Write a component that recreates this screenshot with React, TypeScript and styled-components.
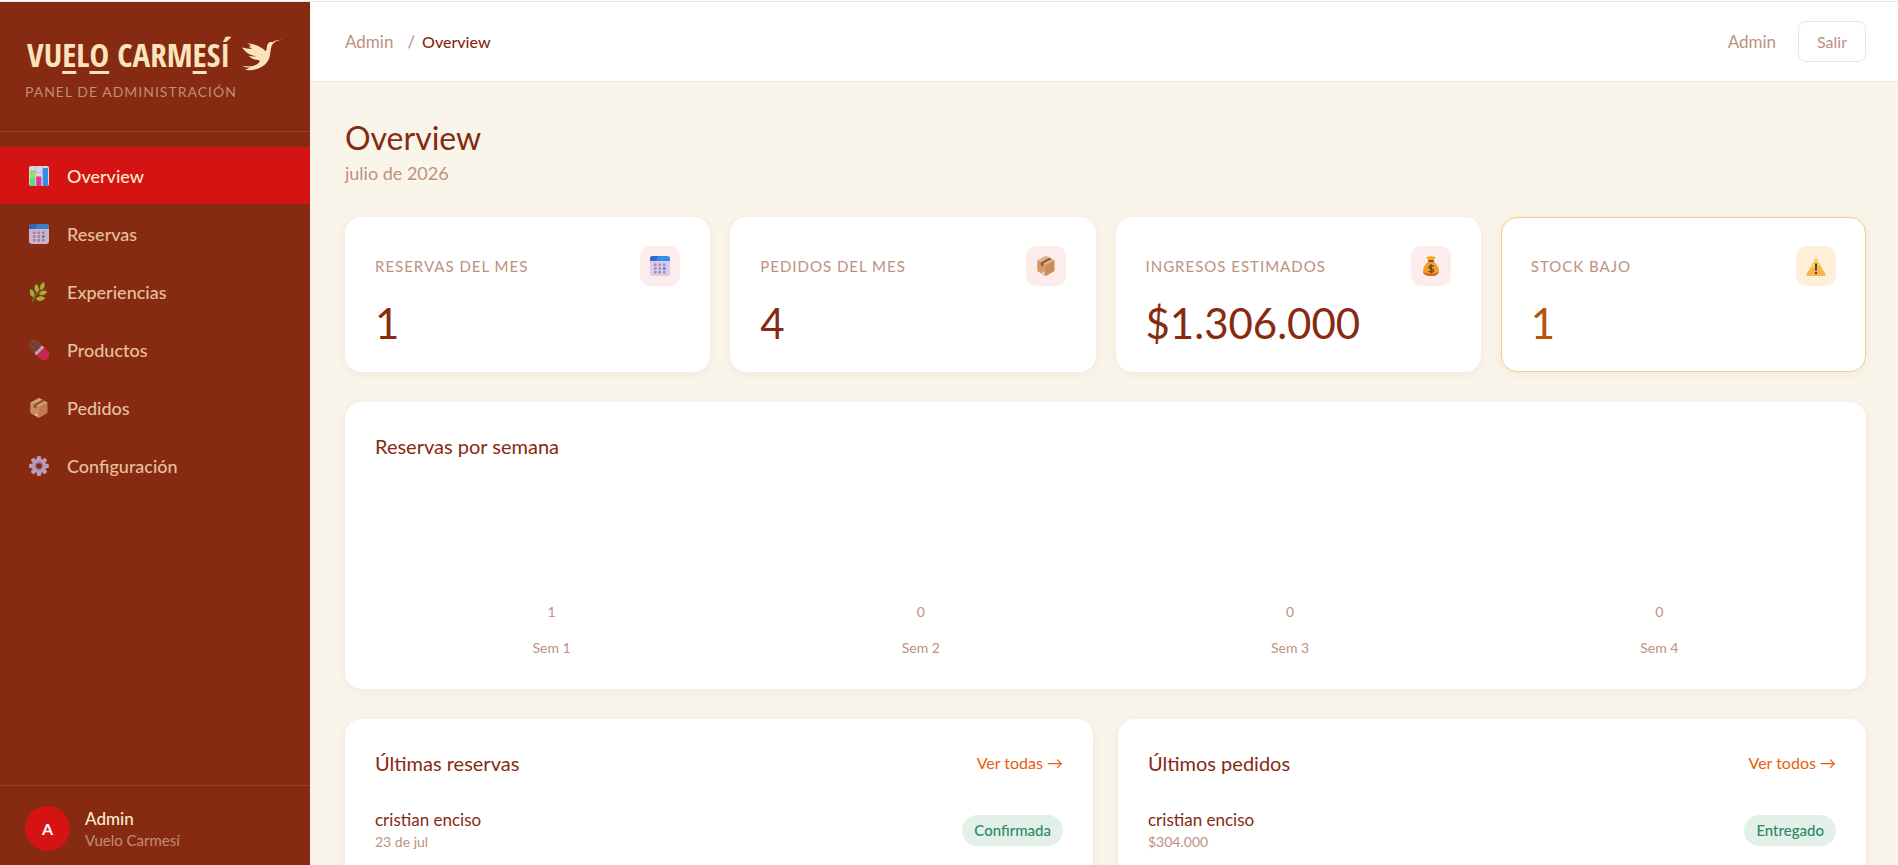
import React from "react";
import styled, { createGlobalStyle } from "styled-components";

const c = {
  brown: "#862a12",
  red: "#d61313",
  cream: "#faf5ea",
  sand: "#fbe3bd",
  muted: "#bd9181",
};

const GlobalStyle = createGlobalStyle`
  * { box-sizing: border-box; }
  body {
    margin: 0;
    background: ${c.cream};
    color: ${c.brown};
    font-family: Lato, "Open Sans", sans-serif;
    font-size: 16px;
    line-height: 24px;
  }
  h1, h2, p, ul { margin: 0; padding: 0; }
  ul { list-style: none; }
  a { text-decoration: none; }
`;

/* ---------- shell ---------- */

const Page = styled.div`
  height: 100vh;
  display: flex;
  flex-direction: column;
`;

const TopRule = styled.div`
  flex: none;
  height: 2px;
  background: #fff;
  border-bottom: 1px solid #e2e2e2;
`;

const Shell = styled.div`
  flex: 1;
  min-height: 0;
  display: flex;
`;

const Sidebar = styled.aside`
  flex: none;
  width: 310px;
  display: flex;
  flex-direction: column;
  background: ${c.brown};
`;

const Brand = styled.div`
  height: 130px;
  padding: 30px 25px 0;
  border-bottom: 1px solid #96422a;
`;

const Logo = styled.div`
  display: flex;
  align-items: center;
  justify-content: space-between;
  height: 46px;
  padding: 0 2px;
  color: ${c.sand};
  font-family: "Open Sans Condensed", "Roboto Condensed", Lato, sans-serif;
  font-size: 33px;
  font-weight: 700;
  line-height: 46px;
  white-space: nowrap;
`;

const Raised = styled.span`
  text-decoration: underline;
  text-decoration-thickness: 3px;
  text-underline-offset: 4px;
`;

const BrandNote = styled.p`
  color: #c48d73;
  font-size: 14px;
  line-height: 24px;
  letter-spacing: 1px;
  margin-top: 2px;
  text-transform: uppercase;
`;

const Nav = styled.nav`
  flex: 1;
  padding-top: 15px;
`;

const NavLink = styled.a<{ $active?: boolean }>`
  display: flex;
  align-items: center;
  gap: 18px;
  height: 57px;
  margin-bottom: 1px;
  padding: 0 29px;
  background: ${(p) => (p.$active ? c.red : "transparent")};
  color: ${(p) => (p.$active ? "#fdeacb" : "#e6c19d")};
  font-size: 18px;
  font-weight: 500;
  svg { opacity: ${(p) => (p.$active ? 1 : 0.85)}; }
`;

const Account = styled.div`
  display: flex;
  align-items: center;
  gap: 15px;
  padding: 20px 25px 14px;
  border-top: 1px solid #96422a;
`;

const Avatar = styled.div`
  width: 45px;
  height: 45px;
  border-radius: 50%;
  background: ${c.red};
  color: #fff;
  display: grid;
  place-items: center;
  font-weight: 700;
`;

const AccountName = styled.p`
  color: #fdeacb;
  font-size: 17px;
  font-weight: 500;
  line-height: 22px;
`;

const AccountNote = styled.p`
  color: #c48d73;
  font-size: 15px;
  line-height: 20px;
`;

const Main = styled.main`
  flex: 1;
  min-width: 0;
  overflow-y: auto;
  scrollbar-width: none;
`;

const Header = styled.header`
  display: flex;
  align-items: center;
  justify-content: space-between;
  height: 80px;
  padding: 0 32px 0 35px;
  background: #fff;
  border-bottom: 1px solid #e6e2df;
`;

const Crumbs = styled.nav`
  display: flex;
  gap: 7px;
  color: ${c.muted};
  font-size: 17px;
  a { color: inherit; margin-right: 7px; }
  strong { color: ${c.brown}; font-size: 16px; font-weight: 500; }
`;

const HeaderUser = styled.div`
  display: flex;
  align-items: center;
  gap: 22px;
  color: ${c.muted};
  font-size: 17px;
`;

const ExitButton = styled.button`
  height: 41px;
  padding: 0 18px;
  background: #fff;
  border: 1px solid #f0e4e1;
  border-radius: 8px;
  color: ${c.muted};
  font: inherit;
  font-size: 16px;
`;

/* ---------- content ---------- */

const Content = styled.div`
  display: flex;
  flex-direction: column;
  gap: 30px;
  padding: 35px 32px 40px 35px;
`;

const Title = styled.h1`
  font-size: 32px;
  font-weight: 400;
  line-height: 42px;
`;

const Subtitle = styled.p`
  color: ${c.muted};
  font-size: 18px;
  line-height: 28px;
`;

const Stats = styled.section`
  display: grid;
  grid-template-columns: repeat(4, 1fr);
  gap: 20px;
`;

const Card = styled.section<{ $warn?: boolean }>`
  padding: 28px 29px;
  background: #fff;
  border: 1px solid ${(p) => (p.$warn ? "#f8ce85" : "#fff")};
  border-radius: 16px;
  box-shadow: 0 2px 12px rgba(134, 42, 18, 0.07);
`;

const StatTop = styled.div`
  display: flex;
  align-items: center;
  justify-content: space-between;
`;

const StatLabel = styled.h2`
  color: ${c.muted};
  font-size: 15px;
  font-weight: 400;
  letter-spacing: 1px;
  text-transform: uppercase;
`;

const StatIcon = styled.div<{ $warn?: boolean }>`
  display: grid;
  place-items: center;
  width: 40px;
  height: 40px;
  border-radius: 10px;
  background: ${(p) => (p.$warn ? "#ffefd9" : "#fdecec")};
`;

const StatValue = styled.p<{ $warn?: boolean }>`
  margin-top: 17px;
  color: ${(p) => (p.$warn ? "#b8530d" : c.brown)};
  font-size: 42px;
  line-height: 40px;
`;

const SectionTitle = styled.h2`
  font-size: 20px;
  font-weight: 400;
  line-height: 30px;
`;

const Chart = styled.div`
  display: grid;
  grid-template-columns: repeat(4, 1fr);
  gap: 16px;
  height: 199px;
`;

const Week = styled.div`
  display: flex;
  flex-direction: column;
  align-items: center;
  justify-content: flex-end;
  gap: 12px;
  color: ${c.muted};
  font-size: 14px;
`;

const Columns = styled.div`
  display: grid;
  grid-template-columns: 1fr 1fr;
  gap: 25px;
`;

const ListHead = styled.div`
  display: flex;
  align-items: center;
  justify-content: space-between;
  margin-bottom: 30px;
`;

const MoreLink = styled.a`
  color: #e85d0c;
  font-size: 16px;
`;

const Entry = styled.li`
  display: flex;
  align-items: center;
  justify-content: space-between;
`;

const EntryName = styled.p`
  font-size: 17px;
  line-height: 24px;
`;

const EntryNote = styled.p`
  color: ${c.muted};
  font-size: 14px;
  line-height: 20px;
`;

const Badge = styled.span`
  padding: 0 12px;
  border-radius: 16px;
  background: #e3f0ea;
  color: #2c8a63;
  font-size: 15px;
  font-weight: 500;
  line-height: 31px;
`;

/* ---------- icons ---------- */

type IconName = "chart" | "calendar" | "herb" | "chocolate" | "box" | "gear" | "money" | "warning";

const Leaf = ({ x, y, r, s = 1 }: { x: number; y: number; r: number; s?: number }) => (
  <path d="M0 0C-2.900-2-2.900-5.800 0-8.500 2.900-5.800 2.900-2 0 0Z" transform={`translate(${x} ${y}) rotate(${r}) scale(${s})`} />
);

const drawings: Record<IconName, React.ReactNode> = {
  chart: (
    <>
      <rect width="20" height="20" rx="2" fill="#ddd5e8" />
      <path d="M7 0V20M13.500 0V20M0 6.500H20M0 13H20" stroke="#b9afc9" strokeWidth="0.800" />
      <rect x="1" y="4" width="5" height="16" fill="#8be06a" />
      <path d="M1 13H6V20H1Z" fill="#57d88a" />
      <rect x="7.300" y="10.500" width="5" height="9.500" fill="#e8338f" />
      <rect x="14" y="2" width="5" height="18" fill="#2f90ea" />
    </>
  ),
  calendar: (
    <>
      <rect width="20" height="20" rx="3" fill="#dccbe8" />
      <path d="M3 0H17a3 3 0 0 1 3 3V5H0V3A3 3 0 0 1 3 0Z" fill="#2f8fee" />
      <path d="M3 0H8L6 5H0V3A3 3 0 0 1 3 0Z" fill="#3167d3" />
      <path d="M4 7.500h2.500v2.500H4zM8.500 7.500H11v2.500H8.500zM13 7.500h2.500v2.500H13zM4 11.300h2.500v2.500H4zM8.500 11.300H11v2.500H8.500zM4 15h2.500v2.500H4zM8.500 15H11v2.500H8.500zM13 15h2.500v2.500H13z" fill="#a08fae" />
      <path d="M13 11.300h2.500v2.500H13z" fill="#1e88f0" />
    </>
  ),
  herb: (
    <>
      <path d="M3.500 20C5 14 9 9 14 4" stroke="#5f9440" strokeWidth="1.200" fill="none" />
      <g fill="#a4c93c">
        <Leaf x={4.500} y={15} r={-20} />
        <Leaf x={8} y={10.500} r={-6} />
        <Leaf x={12} y={8} r={20} />
        <Leaf x={10} y={12} r={74} />
        <Leaf x={7} y={17} r={84} s={1.100} />
      </g>
    </>
  ),
  chocolate: (
    <g transform="rotate(-45 10 10)">
      <rect x="4.500" y="-2" width="11" height="13" rx="1" fill="#7d4a3c" />
      <path d="M10-2V9M4.500 2H15.500M4.500 6H15.500" stroke="#5d332a" strokeWidth="0.900" />
      <rect x="4.500" y="10" width="11" height="12" rx="1" fill="#d42458" />
      <path d="M4.500 9.500 6.500 8.700 8.400 9.700 10 8.700 11.700 9.700 13.500 8.700 15.500 9.500V12H4.500Z" fill="#c9b7d3" />
    </g>
  ),
  box: (
    <>
      <path d="M10 0 18.500 4.500V15L10 20 1.500 15V4.500Z" fill="#c98a5c" />
      <path d="M10 0 18.500 4.500 10 9 1.500 4.500Z" fill="#e3b27c" />
      <path d="M1.500 4.500 10 9V20L1.500 15Z" fill="#d59c6b" />
      <path d="M13.300 1.800 4.800 6.400V9.400L7.300 10.800V7.600L15.800 3.100Z" fill="#8a5a44" />
      <path d="M6 15.500 8.500 16.800V18.500L6 17.100Z" fill="#f2dfe6" />
    </>
  ),
  gear: (
    <>
      <g fill="#c3b0d2">
        {[0, 45, 90, 135].map((a) => (
          <rect key={a} x="7.800" y="0" width="4.400" height="20" rx="1.600" transform={`rotate(${a} 10 10)`} />
        ))}
      </g>
      <circle cx="10" cy="10" r="7.200" fill="#c3b0d2" />
      <circle cx="10" cy="10" r="4.400" fill="#a38eb0" />
      <circle cx="10" cy="10" r="2.800" fill={c.brown} />
    </>
  ),
  money: (
    <>
      <path d="M5.500 1.500C7-.2 8 1.200 10 0c2 1.200 3-.2 4.500 1.500L12.500 4.500h-5Z" fill="#f6a723" />
      <path d="M7.500 5.500h5C16 8 18 11.500 18 15c0 3.500-2.500 5-8 5s-8-1.500-8-5c0-3.500 2-7 5.500-9.500Z" fill="#f0a028" />
      <path d="M2.200 16c.6 2.800 3.100 4 7.800 4s7.200-1.200 7.800-4c-4 2.300-11.600 2.300-15.600 0Z" fill="#d5692c" />
      <rect x="7" y="4" width="6" height="2" rx="1" fill="#8a4a2c" />
      <path d="M12.600 10.600C11.800 9.300 8 9.200 8 11.200c0 2.200 4.600 1.200 4.600 3.400 0 2-3.900 2-4.900.4M10.200 8.300V17.500" stroke="#6b4423" strokeWidth="1.400" fill="none" />
    </>
  ),
  warning: (
    <>
      <path d="M10 1.500 19.500 18.200Q20 20 18.500 20H1.500Q0 20 .5 18.200Z" fill="#fdb64b" />
      <path d="M10 1.500 14.500 9.500 3.500 13Z" fill="#fdd05a" />
      <path d="M9 7.500h2L10.700 15H9.300Z" fill="#3c3040" />
      <circle cx="10" cy="17.200" r="1.100" fill="#3c3040" />
    </>
  ),
};

const Icon = ({ name }: { name: IconName }) => (
  <svg width="20" height="20" viewBox="0 0 20 20" aria-hidden="true">
    {drawings[name]}
  </svg>
);

const Hummingbird = () => (
  <svg width="42" height="34" viewBox="0 0 42 34" fill={c.sand} aria-hidden="true">
    <path d="M41 1.500C36 2 33 3 31.500 4.200 28.500 3.200 26.500 5 26 8c-.2 2-.4 3.500-1.200 5.300C21.500 9.500 14 5.500 6.500 5.500c2 1.200 3 1.700 4 2.700-1 .2-2-.1-3 0 1.200 1.200 2.500 2 4 2.700C7.500 10.800 4 10.300 1 9.500c3 4.500 8 8 14.500 8.800-3 .2-5.500 0-8-.6 3 3 6.500 4.300 10 4.300 1.500.8 1.500 2-.5 3.500-2.500 1.800-5.500 2.700-9 2.700-2.500 0-4.500-.3-6.500.3 3 1 5.500 1.200 8 .8-2 1-4 2-5.500 2.500 8 1.500 17.500-1.500 22-7.500 3-4 3-7.500 3.500-11.500C30 9.500 30.500 7.500 32 5.800 34 3.500 37 2.300 41 1.500Z" />
  </svg>
);

/* ---------- data ---------- */

const links: { icon: IconName; label: string }[] = [
  { icon: "chart", label: "Overview" },
  { icon: "calendar", label: "Reservas" },
  { icon: "herb", label: "Experiencias" },
  { icon: "chocolate", label: "Productos" },
  { icon: "box", label: "Pedidos" },
  { icon: "gear", label: "Configuración" },
];

const stats: { icon: IconName; label: string; value: string; warn?: boolean }[] = [
  { icon: "calendar", label: "Reservas del mes", value: "1" },
  { icon: "box", label: "Pedidos del mes", value: "4" },
  { icon: "money", label: "Ingresos estimados", value: "$1.306.000" },
  { icon: "warning", label: "Stock bajo", value: "1", warn: true },
];

const weeks = [1, 0, 0, 0];

const lists = [
  { title: "Últimas reservas", more: "Ver todas →", name: "cristian enciso", note: "23 de jul", state: "Confirmada" },
  { title: "Últimos pedidos", more: "Ver todos →", name: "cristian enciso", note: "$304.000", state: "Entregado" },
];

export default function App() {
  return (
    <Page>
      <GlobalStyle />
      <TopRule />
      <Shell>
        <Sidebar>
          <Brand>
            <Logo>
              <span>
                VU<Raised>E</Raised>L<Raised>O</Raised> CARM<Raised>E</Raised>SÍ
              </span>
              <Hummingbird />
            </Logo>
            <BrandNote>Panel de administración</BrandNote>
          </Brand>
          <Nav>
            <ul>
              {links.map((l, i) => (
                <li key={l.label}>
                  <NavLink href="#" $active={i === 0}>
                    <Icon name={l.icon} />
                    {l.label}
                  </NavLink>
                </li>
              ))}
            </ul>
          </Nav>
          <Account>
            <Avatar>A</Avatar>
            <div>
              <AccountName>Admin</AccountName>
              <AccountNote>Vuelo Carmesí</AccountNote>
            </div>
          </Account>
        </Sidebar>
        <Main>
          <Header>
            <Crumbs>
              <a href="#">Admin</a>
              <span>/</span>
              <strong>Overview</strong>
            </Crumbs>
            <HeaderUser>
              <span>Admin</span>
              <ExitButton type="button">Salir</ExitButton>
            </HeaderUser>
          </Header>
          <Content>
            <div>
              <Title>Overview</Title>
              <Subtitle>julio de 2026</Subtitle>
            </div>
            <Stats>
              {stats.map((s) => (
                <Card key={s.label} $warn={s.warn}>
                  <StatTop>
                    <StatLabel>{s.label}</StatLabel>
                    <StatIcon $warn={s.warn}>
                      <Icon name={s.icon} />
                    </StatIcon>
                  </StatTop>
                  <StatValue $warn={s.warn}>{s.value}</StatValue>
                </Card>
              ))}
            </Stats>
            <Card>
              <SectionTitle>Reservas por semana</SectionTitle>
              <Chart>
                {weeks.map((n, i) => (
                  <Week key={i}>
                    <span>{n}</span>
                    <span>Sem {i + 1}</span>
                  </Week>
                ))}
              </Chart>
            </Card>
            <Columns>
              {lists.map((l) => (
                <Card key={l.title}>
                  <ListHead>
                    <SectionTitle>{l.title}</SectionTitle>
                    <MoreLink href="#">{l.more}</MoreLink>
                  </ListHead>
                  <ul>
                    <Entry>
                      <div>
                        <EntryName>{l.name}</EntryName>
                        <EntryNote>{l.note}</EntryNote>
                      </div>
                      <Badge>{l.state}</Badge>
                    </Entry>
                  </ul>
                </Card>
              ))}
            </Columns>
          </Content>
        </Main>
      </Shell>
    </Page>
  );
}
